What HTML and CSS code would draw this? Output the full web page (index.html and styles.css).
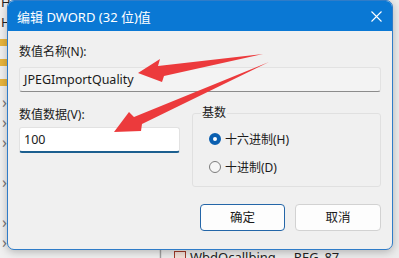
FILE: index.html
```html
<!DOCTYPE html>
<html lang="zh-CN">
<head>
<meta charset="utf-8">
<title>编辑 DWORD (32 位)值</title>
<link rel="stylesheet" href="styles.css">
</head>
<body>
<div class="desktop">
  <div class="regedit">
    <div class="tree">
      <div class="tree-row"><span class="tree-text">H</span></div>
      <div class="tree-row"><span class="tree-text">H</span></div>
      <div class="tree-row"><span class="folder"></span></div>
      <div class="tree-row"><span class="folder"></span></div>
      <div class="tree-row"><span class="folder"></span></div>
      <div class="tree-row"><span class="chev">›</span></div>
      <div class="tree-row"><span class="chev">›</span></div>
      <div class="tree-row"><span class="chev">›</span></div>
      <div class="tree-row"></div>
      <div class="tree-row"><span class="chev">›</span></div>
      <div class="tree-row"></div>
      <div class="tree-row"><span class="chev">›</span></div>
      <div class="tree-row"><span class="chev">›</span></div>
    </div>
    <div class="divider"></div>
    <div class="list">
      <div class="list-row"><span class="reg-icon"></span><span class="list-text">WbdOcallbing</span><span class="list-type">REG_87</span></div>
    </div>
  </div>

  <div class="dialog">
    <div class="titlebar">
      <span class="title">编辑 DWORD (32 位)值</span>
      <svg class="close" width="11" height="11" viewBox="0 0 11 11"><path d="M0.5 0.5 L10.5 10.5 M10.5 0.5 L0.5 10.5" stroke="#ffffff" stroke-width="1.1" fill="none"/></svg>
    </div>
    <div class="body">
      <div class="label">数值名称(N):</div>
      <div class="field readonly">JPEGImportQuality</div>
      <div class="row">
        <div class="col-left">
          <div class="label tight">数值数据(V):</div>
          <div class="field edit">100</div>
        </div>
        <fieldset class="group">
          <legend>基数</legend>
          <div class="radios">
            <div class="radio-row"><span class="radio checked"></span><span>十六进制(H)</span></div>
            <div class="radio-row"><span class="radio"></span><span>十进制(D)</span></div>
          </div>
        </fieldset>
      </div>
      <div class="buttons">
        <div class="btn primary">确定</div>
        <div class="btn">取消</div>
      </div>
    </div>
  </div>

  <svg class="arrows" width="399" height="258" viewBox="0 0 399 258">
    <polygon points="138,73 160,59 158,66 263,54 164,76 162,82" fill="#ec3a3c"/>
    <polygon points="114,132 129,112 134,117 269,62 142,124 141,131" fill="#ec3a3c"/>
  </svg>
</div>
</body>
</html>
```
FILE: styles.css
```css
* { box-sizing: border-box; }
html, body { margin: 0; padding: 0; }
body {
  width: 399px;
  height: 258px;
  overflow: hidden;
  font-family: "Segoe UI", "Noto Sans", "Noto Sans CJK SC", sans-serif;
  font-size: 12px;
  color: #1b1b1b;
  background: #f7f7f7;
}
.desktop {
  position: relative;
  width: 399px;
  height: 258px;
  overflow: hidden;
}
.regedit {
  display: grid;
  grid-template-columns: 159px 3px 1fr;
  height: 258px;
}
.tree {
  background: #f0f0f0;
  display: flex;
  flex-direction: column;
  margin-top: -8px;
}
.tree-row {
  height: 20px;
  display: flex;
  align-items: center;
  padding-left: 1px;
  flex: none;
}
.tree-text { font-size: 13px; color: #222; white-space: nowrap; }
.folder {
  width: 16px;
  height: 7px;
  background: #e8b43c;
  border-radius: 2px;
  margin-left: -8px;
}
.chev { font-size: 16px; color: #777; line-height: 1; margin-left: 1px; }
.divider { background: #a0a0a0; border-left: 1px solid #ddd; border-right: 1px solid #ddd; }
.list {
  background: #ececec;
  display: flex;
  align-items: flex-end;
}
.list-row {
  display: flex;
  align-items: center;
  gap: 4px;
  height: 18px;
  margin-bottom: -8px;
  padding-left: 12px;
  color: #222;
  font-size: 13px;
}
.reg-icon {
  width: 12px;
  height: 12px;
  border: 1px solid #a23a2a;
  background: #f4e0d8;
}
.list-type { margin-left: 14px; }

.dialog {
  position: absolute;
  left: 7px;
  top: 0;
  width: 386px;
  height: 250px;
  background: #f0f0f0;
  border: 1px solid #2f7cc8;
  border-radius: 7px;
  overflow: hidden;
  box-shadow: 0 2px 8px rgba(0,0,0,0.25);
}
.titlebar {
  height: 30px;
  background: #0a78d4;
  color: #ffffff;
  display: flex;
  align-items: center;
  justify-content: space-between;
  padding: 0 10px 0 9px;
}
.title { font-size: 13px; }
.close { display: block; }
.body {
  padding: 13px 11px 0 11px;
}
.label {
  height: 16px;
  line-height: 16px;
  margin-bottom: 7px;
}
.label.tight { margin-bottom: 4px; }
.field {
  height: 25px;
  line-height: 23px;
  padding-left: 4px;
  border: 1px solid #e2e2e2;
  border-radius: 3px;
  font-size: 12.5px;
}
.field.readonly {
  background: #f3f3f3;
  border-bottom: 1px solid #8c8c8c;
}
.field.edit {
  height: 26px;
  background: #ffffff;
  border-bottom: 2px solid #1c5f8f;
}
.row {
  display: flex;
  gap: 12px;
  margin-top: 13px;
}
.col-left {
  width: 161px;
  padding-top: 2px;
}
.group {
  flex: 1;
  margin: 0;
  padding: 0 0 9px 8px;
  border: 1px solid #e0e0e0;
  border-radius: 3px;
  min-width: 0;
}
.group legend {
  padding: 0 1px;
  line-height: 16px;
  font-size: 12px;
}
.radios {
  padding: 8px 0 0 8px;
  display: flex;
  flex-direction: column;
  gap: 8px;
}
.radio-row {
  display: flex;
  align-items: center;
  gap: 4px;
  height: 20px;
}
.radio {
  width: 12px;
  height: 12px;
  border-radius: 50%;
  border: 1px solid #7c7c7c;
  background: #f6f6f6;
  flex: none;
}
.radio.checked {
  border: 4px solid #0a5fb0;
  background: #ffffff;
}
.buttons {
  display: flex;
  justify-content: flex-end;
  gap: 10px;
  margin-top: 17px;
}
.btn {
  width: 86px;
  height: 27px;
  line-height: 25px;
  text-align: center;
  background: #fdfdfd;
  border: 1px solid #d2d2d2;
  border-radius: 4px;
  font-size: 12.5px;
}
.btn.primary {
  border-color: #2466a8;
  width: 85px;
}
.arrows {
  position: absolute;
  left: 0;
  top: 0;
  pointer-events: none;
}
```
